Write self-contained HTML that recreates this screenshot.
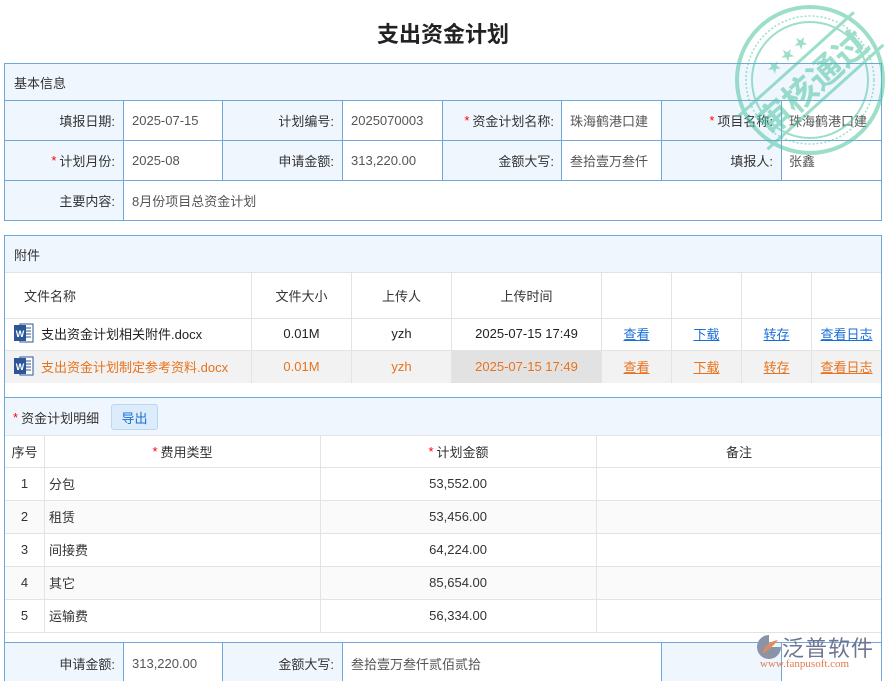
<!DOCTYPE html>
<html style="width:886px;height:681px;overflow:hidden"><head><meta charset="utf-8">
<style>
*{margin:0;padding:0;box-sizing:border-box}
body{width:886px;height:681px;overflow:hidden;background:#fff;font-family:"Liberation Sans","Noto Sans CJK SC",sans-serif;font-size:13px;color:#333;position:relative}
.a{position:absolute}
.box{position:absolute;border:1px solid #6fa6dc;background:#fff}
.hd{position:absolute;background:#f0f6fe}
.c{position:absolute;display:flex;align-items:center;white-space:nowrap}
.lab{background:#f0f6fe;justify-content:flex-end;padding-right:8px}
.val{padding-left:8px;color:#555}
.vl{position:absolute;width:1px;background:#6fa6dc}
.hl{position:absolute;height:1px;background:#6fa6dc}
.gv{position:absolute;width:1px;background:#e3e3e3}
.gh{position:absolute;height:1px;background:#e3e3e3}
.r{color:#f00;margin-right:3px}
.lk{color:#1a6fd6;text-decoration:underline}
.or{color:#e8731c}
</style></head><body>
<div class="a" style="left:0;top:17px;width:886px;text-align:center;font-size:22px;font-weight:bold;color:#222">支出资金计划</div>

<div class="box" style="left:4px;top:63px;width:878px;height:158px"></div>
<div class="hd" style="left:5px;top:64px;width:876px;height:36px"></div>
<div class="c" style="left:14px;top:64px;height:36px">基本信息</div>
<div class="hl" style="left:4px;top:100px;width:878px"></div>
<div class="hl" style="left:4px;top:140px;width:878px"></div>
<div class="hl" style="left:4px;top:180px;width:878px"></div>
<div class="c lab" style="left:5px;top:101px;width:118px;height:39px">填报日期:</div>
<div class="c val" style="left:124px;top:101px;height:39px">2025-07-15</div>
<div class="c lab" style="left:223px;top:101px;width:119px;height:39px">计划编号:</div>
<div class="c val" style="left:343px;top:101px;height:39px">2025070003</div>
<div class="c lab" style="left:443px;top:101px;width:119px;height:39px"><span class="r">*</span>资金计划名称:</div>
<div class="c val" style="left:562px;top:101px;height:39px">珠海鹤港口建</div>
<div class="c lab" style="left:662px;top:101px;width:119px;height:39px"><span class="r">*</span>项目名称:</div>
<div class="c val" style="left:781px;top:101px;height:39px">珠海鹤港口建</div>

<div class="c lab" style="left:5px;top:141px;width:118px;height:39px"><span class="r">*</span>计划月份:</div>
<div class="c val" style="left:124px;top:141px;height:39px">2025-08</div>
<div class="c lab" style="left:223px;top:141px;width:119px;height:39px">申请金额:</div>
<div class="c val" style="left:343px;top:141px;height:39px">313,220.00</div>
<div class="c lab" style="left:443px;top:141px;width:119px;height:39px">金额大写:</div>
<div class="c val" style="left:562px;top:141px;height:39px">叁拾壹万叁仟</div>
<div class="c lab" style="left:662px;top:141px;width:119px;height:39px">填报人:</div>
<div class="c val" style="left:781px;top:141px;height:39px">张鑫</div>

<div class="c lab" style="left:5px;top:181px;width:118px;height:39px">主要内容:</div>
<div class="c val" style="left:124px;top:181px;height:39px">8月份项目总资金计划</div>
<div class="vl" style="left:123px;top:100px;height:120px"></div>
<div class="vl" style="left:222px;top:100px;height:80px"></div>
<div class="vl" style="left:342px;top:100px;height:80px"></div>
<div class="vl" style="left:442px;top:100px;height:80px"></div>
<div class="vl" style="left:561px;top:100px;height:80px"></div>
<div class="vl" style="left:661px;top:100px;height:80px"></div>
<div class="vl" style="left:781px;top:100px;height:80px"></div>

<div class="box" style="left:4px;top:235px;width:878px;height:229px"></div>
<div class="hd" style="left:5px;top:236px;width:876px;height:36px"></div>
<div class="c" style="left:14px;top:236px;height:36px">附件</div>
<div class="gh" style="left:5px;top:272px;width:876px"></div>
<div class="gh" style="left:5px;top:318px;width:876px"></div>
<div class="gh" style="left:5px;top:350px;width:876px"></div>
<div class="a" style="left:5px;top:351px;width:876px;height:32px;background:#f2f2f2"></div>
<div class="a" style="left:452px;top:351px;width:150px;height:32px;background:#e2e2e2"></div>
<div class="gv" style="left:251px;top:272px;height:111px"></div>
<div class="gv" style="left:351px;top:272px;height:111px"></div>
<div class="gv" style="left:451px;top:272px;height:111px"></div>
<div class="gv" style="left:601px;top:272px;height:111px"></div>
<div class="gv" style="left:671px;top:272px;height:111px"></div>
<div class="gv" style="left:741px;top:272px;height:111px"></div>
<div class="gv" style="left:811px;top:272px;height:111px"></div>
<div class="c" style="left:24px;top:273px;height:45px">文件名称</div>
<div class="c" style="left:252px;top:273px;width:99px;height:45px;justify-content:center">文件大小</div>
<div class="c" style="left:352px;top:273px;width:99px;height:45px;justify-content:center">上传人</div>
<div class="c" style="left:452px;top:273px;width:149px;height:45px;justify-content:center">上传时间</div>

<svg class="a" style="left:14px;top:322px" width="20" height="22" viewBox="0 0 20 22"><rect x="6" y="2" width="13" height="18" fill="#fff" stroke="#2b5797"/><path d="M9 6h8M9 9h8M9 12h8M9 15h8" stroke="#2b5797"/><rect x="0" y="3" width="12" height="16" fill="#2b5797"/><text x="6" y="15" font-size="9" fill="#fff" text-anchor="middle" font-family="Liberation Sans" font-weight="bold">W</text></svg>
<svg class="a" style="left:14px;top:355px" width="20" height="22" viewBox="0 0 20 22"><rect x="6" y="2" width="13" height="18" fill="#fff" stroke="#2b5797"/><path d="M9 6h8M9 9h8M9 12h8M9 15h8" stroke="#2b5797"/><rect x="0" y="3" width="12" height="16" fill="#2b5797"/><text x="6" y="15" font-size="9" fill="#fff" text-anchor="middle" font-family="Liberation Sans" font-weight="bold">W</text></svg>
<div class="c" style="left:41px;top:317px;height:32px;color:#222">支出资金计划相关附件.docx</div>
<div class="c" style="left:252px;top:317px;width:99px;height:32px;justify-content:center;color:#222">0.01M</div>
<div class="c" style="left:352px;top:317px;width:99px;height:32px;justify-content:center;color:#222">yzh</div>
<div class="c" style="left:452px;top:317px;width:149px;height:32px;justify-content:center;color:#222">2025-07-15 17:49</div>
<div class="c lk" style="left:602px;top:317px;width:69px;height:32px;justify-content:center">查看</div>
<div class="c lk" style="left:672px;top:317px;width:69px;height:32px;justify-content:center">下载</div>
<div class="c lk" style="left:742px;top:317px;width:69px;height:32px;justify-content:center">转存</div>
<div class="c lk" style="left:812px;top:317px;width:69px;height:32px;justify-content:center">查看日志</div>

<div class="c or" style="left:41px;top:350px;height:32px">支出资金计划制定参考资料.docx</div>
<div class="c or" style="left:252px;top:350px;width:99px;height:32px;justify-content:center">0.01M</div>
<div class="c or" style="left:352px;top:350px;width:99px;height:32px;justify-content:center">yzh</div>
<div class="c or" style="left:452px;top:350px;width:149px;height:32px;justify-content:center">2025-07-15 17:49</div>
<div class="c or" style="left:602px;top:350px;width:69px;height:32px;justify-content:center;text-decoration:underline">查看</div>
<div class="c or" style="left:672px;top:350px;width:69px;height:32px;justify-content:center;text-decoration:underline">下载</div>
<div class="c or" style="left:742px;top:350px;width:69px;height:32px;justify-content:center;text-decoration:underline">转存</div>
<div class="c or" style="left:812px;top:350px;width:69px;height:32px;justify-content:center;text-decoration:underline">查看日志</div>

<div class="box" style="left:4px;top:397px;width:878px;height:290px"></div>
<div class="hd" style="left:5px;top:398px;width:876px;height:37px"></div>
<div class="c" style="left:13px;top:398px;height:38px"><span class="r">*</span>资金计划明细</div>
<div class="c" style="left:111px;top:404px;width:47px;height:26px;background:#dcecfb;border:1px solid #b9d6f2;border-radius:3px;justify-content:center;color:#1a6fd6">导出</div>
<div class="gh" style="left:5px;top:435px;width:876px"></div>
<div class="gh" style="left:5px;top:467px;width:876px"></div>
<div class="gh" style="left:5px;top:500px;width:876px"></div>
<div class="gh" style="left:5px;top:533px;width:876px"></div>
<div class="gh" style="left:5px;top:566px;width:876px"></div>
<div class="gh" style="left:5px;top:599px;width:876px"></div>
<div class="gh" style="left:5px;top:632px;width:876px"></div>
<div class="a" style="left:5px;top:501px;width:876px;height:32px;background:#fafafa"></div>
<div class="a" style="left:5px;top:567px;width:876px;height:32px;background:#fafafa"></div>
<div class="gv" style="left:44px;top:435px;height:197px"></div>
<div class="gv" style="left:320px;top:435px;height:197px"></div>
<div class="gv" style="left:596px;top:435px;height:197px"></div>
<div class="c" style="left:5px;top:436px;width:39px;height:31px;justify-content:center">序号</div>
<div class="c" style="left:45px;top:436px;width:275px;height:31px;justify-content:center"><span class="r">*</span>费用类型</div>
<div class="c" style="left:321px;top:436px;width:275px;height:31px;justify-content:center"><span class="r">*</span>计划金额</div>
<div class="c" style="left:597px;top:436px;width:284px;height:31px;justify-content:center">备注</div>

<div class="c" style="left:5px;top:467px;width:39px;height:32px;justify-content:center">1</div>
<div class="c" style="left:49px;top:467px;height:32px">分包</div>
<div class="c" style="left:321px;top:467px;width:166px;height:32px;justify-content:flex-end">53,552.00</div>
<div class="c" style="left:5px;top:500px;width:39px;height:32px;justify-content:center">2</div>
<div class="c" style="left:49px;top:500px;height:32px">租赁</div>
<div class="c" style="left:321px;top:500px;width:166px;height:32px;justify-content:flex-end">53,456.00</div>
<div class="c" style="left:5px;top:533px;width:39px;height:32px;justify-content:center">3</div>
<div class="c" style="left:49px;top:533px;height:32px">间接费</div>
<div class="c" style="left:321px;top:533px;width:166px;height:32px;justify-content:flex-end">64,224.00</div>
<div class="c" style="left:5px;top:566px;width:39px;height:32px;justify-content:center">4</div>
<div class="c" style="left:49px;top:566px;height:32px">其它</div>
<div class="c" style="left:321px;top:566px;width:166px;height:32px;justify-content:flex-end">85,654.00</div>
<div class="c" style="left:5px;top:599px;width:39px;height:32px;justify-content:center">5</div>
<div class="c" style="left:49px;top:599px;height:32px">运输费</div>
<div class="c" style="left:321px;top:599px;width:166px;height:32px;justify-content:flex-end">56,334.00</div>

<div class="hl" style="left:4px;top:642px;width:878px"></div>
<div class="c lab" style="left:5px;top:643px;width:118px;height:40px">申请金额:</div>
<div class="c val" style="left:124px;top:643px;height:40px">313,220.00</div>
<div class="c lab" style="left:223px;top:643px;width:119px;height:40px">金额大写:</div>
<div class="c val" style="left:343px;top:643px;height:40px">叁拾壹万叁仟贰佰贰拾</div>
<div class="a" style="left:662px;top:643px;width:119px;height:40px;background:#f0f6fe"></div>
<div class="vl" style="left:123px;top:642px;height:40px"></div>
<div class="vl" style="left:222px;top:642px;height:40px"></div>
<div class="vl" style="left:342px;top:642px;height:40px"></div>
<div class="vl" style="left:661px;top:642px;height:40px"></div>
<div class="vl" style="left:781px;top:642px;height:40px"></div>

<svg class="a" style="left:756px;top:634px" width="26" height="26" viewBox="0 0 26 26"><path d="M13 1 A12 12 0 1 0 25 13 L13 13Z" fill="#8a93a8"/><path d="M6 20 Q10 8 22 6 Q16 14 6 20Z" fill="#e38a5a"/></svg>
<div class="a" style="left:782px;top:631px;font-size:22px;color:#6d7690;letter-spacing:1px">泛普软件</div>
<div class="a" style="left:760px;top:658px;font-size:11px;color:#e07a4e;font-family:'Liberation Serif',serif">www.fanpusoft.com</div>

<svg class="a" style="left:732px;top:3px;opacity:.55" width="156" height="156" viewBox="0 0 156 156">
<g fill="none" stroke="#4cc4a0">
<circle cx="78" cy="77" r="73" stroke-width="4"/>
<circle cx="78" cy="77" r="64" stroke-width="1.5" stroke-dasharray="2 2"/>
<circle cx="78" cy="77" r="58" stroke-width="2"/>
<g transform="rotate(-42 78 77)"><line x1="0" y1="56" x2="156" y2="56" stroke-width="3"/><line x1="0" y1="100" x2="156" y2="100" stroke-width="3"/></g>
</g>
<g fill="#4cc4a0" transform="rotate(-42 78 77)">
<text x="78" y="93" font-size="34" font-weight="bold" text-anchor="middle" font-family="Noto Sans CJK SC,sans-serif">审核通过</text>
<text x="78" y="48" font-size="14" text-anchor="middle">★ ★ ★</text>
</g>
</svg>
</body></html>
